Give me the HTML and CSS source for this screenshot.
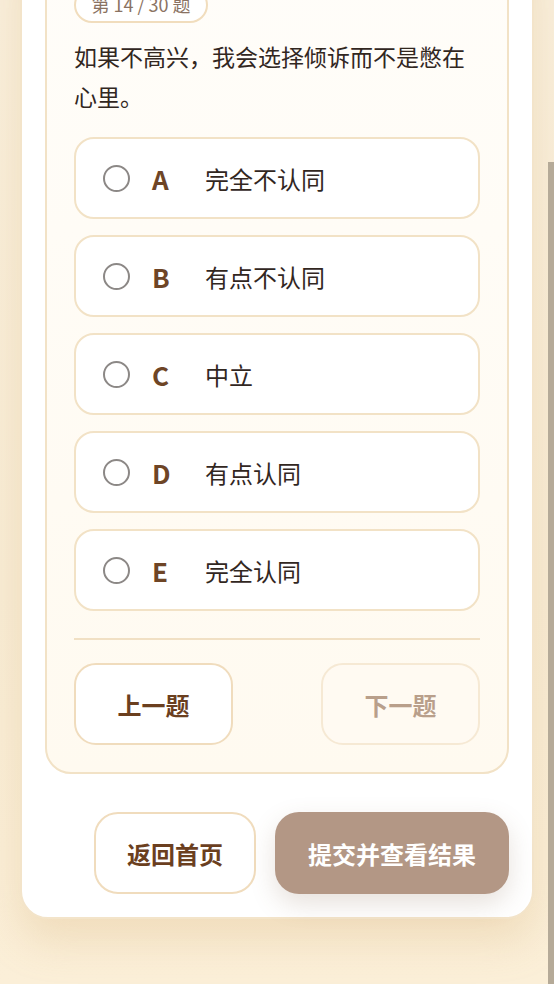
FILE: index.html
```html
<!DOCTYPE html>
<html lang="zh-CN">
<head>
<meta charset="utf-8">
<title>测验</title>
<link rel="stylesheet" href="styles.css">
</head>
<body>
<div class="page">
  <main class="shell">
    <section class="quiz-card">
      <div class="badge">第 14 / 30 题</div>
      <p class="question">如果不高兴，我会选择倾诉而不是憋在心里。</p>
      <ul class="options">
        <li class="option"><span class="radio"></span><span class="letter">A</span><span class="label">完全不认同</span></li>
        <li class="option"><span class="radio"></span><span class="letter">B</span><span class="label">有点不认同</span></li>
        <li class="option"><span class="radio"></span><span class="letter">C</span><span class="label">中立</span></li>
        <li class="option"><span class="radio"></span><span class="letter">D</span><span class="label">有点认同</span></li>
        <li class="option"><span class="radio"></span><span class="letter">E</span><span class="label">完全认同</span></li>
      </ul>
      <div class="divider"></div>
      <div class="nav">
        <button class="nav-btn prev">上一题</button>
        <button class="nav-btn next">下一题</button>
      </div>
    </section>
    <div class="actions">
      <button class="act-btn home">返回首页</button>
      <button class="act-btn submit">提交并查看结果</button>
    </div>
  </main>
</div>
<div class="scroll-thumb"></div>
</body>
</html>
```
FILE: styles.css
```css
html, body {
  margin: 0;
  padding: 0;
  height: 984px;
  overflow: hidden;
}
body {
  font-family: "Noto Sans CJK SC", "Noto Sans", sans-serif;
  background: linear-gradient(180deg, #f9efdc 0%, #f8ecd5 60%, #fbefd8 100%);
  color: #3a2c22;
}
.page {
  padding: 0 20px 67px;
}
.shell {
  margin-top: -70px;
  background: #ffffff;
  border: 2px solid #f3e4ca;
  border-radius: 28px;
  padding: 25px 23px 23px;
  box-shadow: 0 22px 40px rgba(214, 176, 120, 0.28);
}
.quiz-card {
  background: linear-gradient(180deg, #fffdf9, #fffaf0);
  border: 2px solid #f2e2c6;
  border-radius: 26px;
  padding: 28px 27px 27px;
}
.badge {
  box-sizing: border-box;
  width: 134px;
  height: 36px;
  border: 2px solid #f1ddbd;
  border-radius: 18px;
  background: #ffffff;
  font-size: 18px;
  line-height: 30px;
  text-align: center;
  color: #8a7262;
}
.question {
  margin: 13px 0 21px;
  font-size: 23px;
  line-height: 40px;
  color: #32271f;
}
.options {
  list-style: none;
  margin: 0;
  padding: 0;
  display: flex;
  flex-direction: column;
  gap: 16px;
}
.option {
  box-sizing: border-box;
  height: 82px;
  display: flex;
  align-items: center;
  padding: 0 27px;
  background: #ffffff;
  border: 2px solid #f2e2c6;
  border-radius: 20px;
}
.radio {
  box-sizing: border-box;
  width: 27px;
  height: 27px;
  border: 2px solid #8c8886;
  border-radius: 50%;
  flex: none;
}
.letter {
  width: 32px;
  margin-left: 22px;
  margin-right: 21px;
  font-size: 26px;
  font-weight: 700;
  color: #6e4526;
}
.label {
  font-size: 24px;
  color: #32271f;
}
.divider {
  height: 2px;
  background: #f1e0c4;
  margin: 27px 0 23px;
}
.nav {
  display: flex;
  justify-content: space-between;
}
.nav-btn {
  box-sizing: border-box;
  width: 159px;
  height: 82px;
  border-radius: 22px;
  font-family: inherit;
  font-size: 24px;
  font-weight: 700;
}
.prev {
  background: #ffffff;
  border: 2px solid #f0dcbd;
  color: #6b3f1f;
}
.next {
  background: #fffaf2;
  border: 2px solid #f6e9d4;
  color: #b99f8b;
}
.actions {
  margin-top: 38px;
  display: flex;
  justify-content: flex-end;
  gap: 19px;
}
.act-btn {
  box-sizing: border-box;
  height: 82px;
  border-radius: 24px;
  font-family: inherit;
  font-size: 24px;
  font-weight: 700;
}
.home {
  width: 162px;
  background: #ffffff;
  border: 2px solid #f0dcbd;
  color: #6b3f1f;
}
.submit {
  width: 234px;
  background: #b39785;
  border: none;
  color: #ffffff;
  box-shadow: 0 10px 26px rgba(120, 90, 60, 0.18);
}
.scroll-thumb {
  position: fixed;
  right: 0;
  top: 162px;
  bottom: 0;
  width: 6px;
  background: #b5aa98;
}
```
